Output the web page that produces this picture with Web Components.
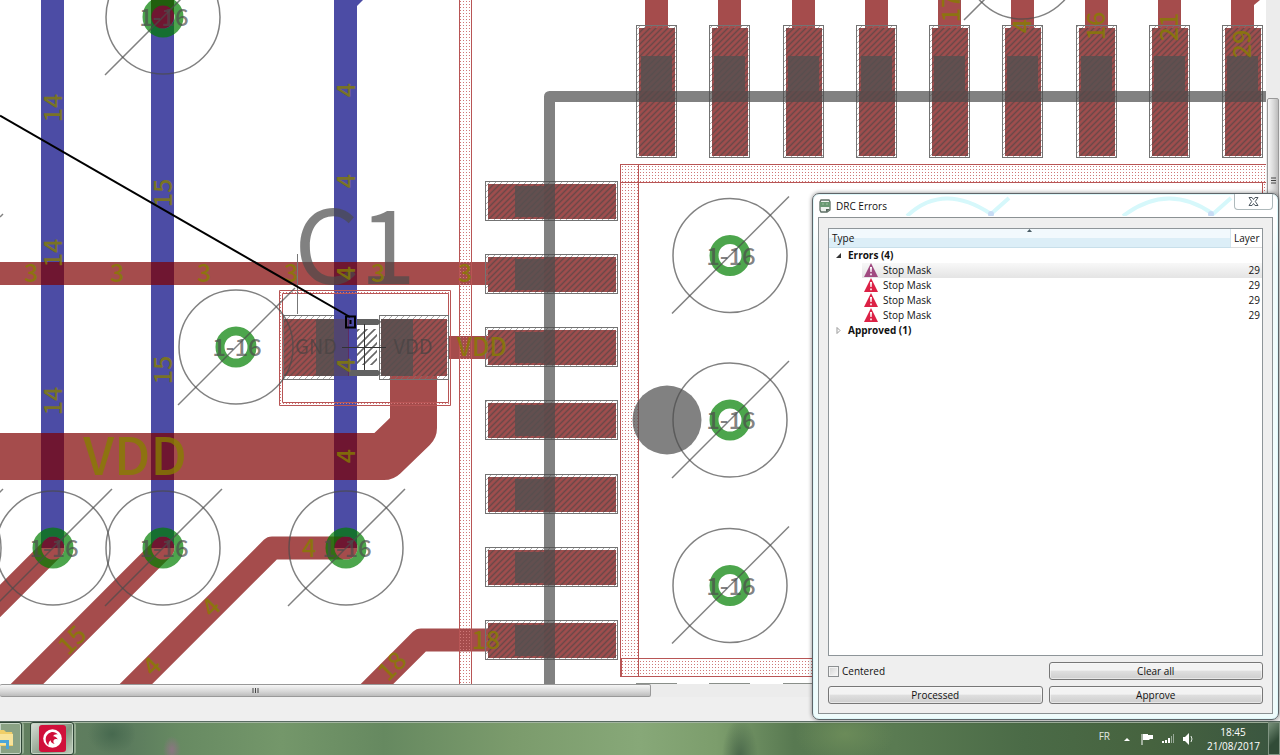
<!DOCTYPE html>
<html lang="en">
<head>
<meta charset="utf-8">
<title>Board - DRC Errors</title>
<style>
html, body { margin: 0; height: 100%; }
body { font: 10px/14px "Open Sans", "Noto Sans", sans-serif; color: #111; background: #efefef; overflow: hidden; }
</style>
</head>
<body>
<desk-top>
  <pcb-board slot="board"></pcb-board>
  <scroll-bar slot="vertical" direction="vertical"></scroll-bar>
  <scroll-bar slot="horizontal" direction="horizontal"></scroll-bar>
  <drc-dialog slot="window" heading="DRC Errors">
    <error-list></error-list>
    <check-box slot="option">Centered</check-box>
    <push-button slot="action">Clear all</push-button>
    <push-button slot="action">Processed</push-button>
    <push-button slot="action">Approve</push-button>
  </drc-dialog>
  <task-bar slot="taskbar">
    <system-tray></system-tray>
  </task-bar>
</desk-top>

<script>
class Base extends HTMLElement {
  constructor() {
    super();
    this.attachShadow({ mode: "open" });
  }
  connectedCallback() {
    this.shadowRoot.innerHTML = this.view();
  }
}

customElements.define("desk-top", class extends Base {
  view() {
    return `<style>
      :host { display: flex; flex-direction: column; height: 100vh; position: relative; }
      .editor { flex: 1; min-height: 0; display: grid; grid-template-columns: minmax(0, 1fr) 14px; grid-template-rows: minmax(0, 1fr) 13px; }
      .status { height: 24px; }
    </style>
    <div class="editor">
      <slot name="board"></slot><slot name="vertical"></slot><slot name="horizontal"></slot>
    </div>
    <div class="status"></div>
    <slot name="taskbar"></slot>
    <slot name="window"></slot>`;
  }
});

customElements.define("pcb-board", class extends Base {
  via(x, y, bare) {
    const ring = bare ? "" : `<circle class="ring" cx="${x}" cy="${y}" r="16"/><text class="via" x="${x + 1}" y="${y + 9}">1-16</text>`;
    return `${ring}<circle class="line" cx="${x}" cy="${y}" r="57"/><path class="line" d="M${x - 58} ${y + 58}L${x + 59} ${y - 59}"/>`;
  }
  label(text, x, y, turn = 0) {
    return `<text class="net" transform="translate(${x} ${y}) rotate(${turn})" y="9">${text}</text>`;
  }
  pad(x, y, w, h, core) {
    return `<rect class="mask" x="${x + .5}" y="${y + .5}" width="${w}" height="${h}"/>
      <rect class="copper" x="${x + 3}" y="${y + 3}" width="${w - 4}" height="${h - 4}"/>
      <rect fill="url(#shade)" x="${x + 3}" y="${y + 3}" width="${w - 4}" height="${h - 4}"/>
      <rect class="core" x="${core[0]}" y="${core[1]}" width="${core[2]}" height="${core[3]}"/>`;
  }
  view() {
    const columns = [636, 709, 783, 856, 929, 1002, 1076, 1149, 1222];
    const rows = [181, 254, 327, 400, 474, 547, 620];
    const n = (...a) => this.label(...a);
    return `<style>
      :host { display: block; background: #fff; overflow: hidden; min-width: 0; }
      svg { display: block; width: 100%; height: 100%; }
      text { text-anchor: middle; font-family: "Noto Sans CJK SC", "DejaVu Sans", sans-serif; }
      .blue { fill: none; stroke: rgb(0 0 127 / .7); stroke-width: 23; }
      .red { fill: none; stroke: rgb(127 0 0 / .7); stroke-width: 23; stroke-linejoin: round; }
      .copper { fill: rgb(127 0 0 / .7); }
      .core { fill: rgb(84 80 80 / .8); }
      .mask { fill: url(#edge); stroke: #737373; }
      .ring { fill: none; stroke: rgb(0 127 0 / .7); stroke-width: 9; }
      .line { fill: none; stroke: rgb(76 76 76 / .7); stroke-width: 1.5; }
      .zone { fill: url(#dots); stroke: #b85555; }
      .via { font-size: 24px; font-weight: 500; fill: rgb(76 76 76 / .7); }
      .net { font-size: 25px; font-weight: 500; fill: rgb(134 127 0 / .78); }
      .part { font-size: 102px; fill: rgb(76 76 76 / .7); }
      .pin { font-size: 20px; fill: rgb(70 66 66 / .7); }
      .outline { fill: none; stroke: rgb(76 76 76 / .7); stroke-width: 11; stroke-linejoin: round; }
    </style>
    <svg role="img" aria-label="Circuit board layout">
      <defs>
        <pattern id="dots" width="6" height="6" patternUnits="userSpaceOnUse">
          <path fill="#cf7878" d="M1 1h1v1h-1zM4 4h1v1h-1zM4 1h1v1h-1zM1 4h1v1h-1z"/>
        </pattern>
        <pattern id="edge" width="6" height="6" patternUnits="userSpaceOnUse">
          <path d="M-1 7L7 -1" stroke="#777" stroke-opacity=".6"/>
        </pattern>
        <pattern id="shade" width="6" height="6" patternUnits="userSpaceOnUse">
          <path d="M-1 7L7 -1M-2 2L2 -2M4 8L8 4" stroke="#5e5050" stroke-opacity=".55" stroke-width="2.6"/>
        </pattern>
        <pattern id="coarse" width="8" height="8" patternUnits="userSpaceOnUse">
          <path d="M-1 9L9 -1M-2 2L2 -2M6 10L10 6" stroke="#666" stroke-width="1.6"/>
        </pattern>
      </defs>

      <path class="blue" d="M52.5 0V548M162.5 0V548M345.5 0V548"/>
      <path d="M357 0h6l-6 6z" fill="#4c4ca5"/>
      <path class="red" d="M0 273.5H488"/>
      <path class="red" d="M448 347.5H488"/>
      <path class="red" stroke-linecap="round" d="M-20 621L53 548"/>
      <path class="red" stroke-linecap="round" d="M13 698L163 548"/>
      <path class="red" stroke-linecap="round" d="M122 698L272 548H346"/>
      <path class="red" stroke-linecap="round" d="M162.5 -20V17"/>
      <path class="red" d="M363 698L421 640H488"/>
      <path class="red" style="stroke-width:47" d="M-20 456.5H384L413.5 428V376"/>
      <path class="red" d="${columns.map(x => `M${x + 20.5} 0V28`).join("")}"/>
      <path d="M1254 0h6l-6 5z" fill="#a54c4c"/>

      <rect class="zone" x="459.5" y="-2" width="12" height="700"/>
      <rect class="zone" x="620.5" y="164.5" width="18" height="512"/>
      <rect class="zone" x="620.5" y="164.5" width="660" height="18"/>
      <rect class="zone" x="621.5" y="658.5" width="660" height="18"/>
      <rect class="zone" x="1262.5" y="182.5" width="18" height="494"/>
      <path d="M279.5 290.5H450.5V405.5H279.5ZM282.500 293.5V402.5H448.5V293.5Z" fill="url(#dots)" fill-rule="evenodd" stroke="#b85555"/>

      ${columns.map(x => this.pad(x, 25, 40, 132, [x + 5, 56, 31, 35])).join("")}
      ${rows.map(y => this.pad(485, y, 132, 39, [515, y + 5, 29, 31])).join("")}
      <path class="outline" d="M549.5 690V96.5H1266"/>
      <path d="M${columns.map(x => `${x} 683.5h41`).join("M")}" stroke="#8a8f8a"/>

      <path class="mask" d="M334 315.5H283.5V379.5H334"/>
      <rect class="mask" x="379.5" y="315.5" width="69" height="64"/>
      <rect class="copper" x="284" y="319" width="65" height="57"/>
      <rect class="copper" x="381" y="319" width="66" height="57"/>
      <rect fill="url(#shade)" x="284" y="319" width="50" height="57"/>
      <rect fill="url(#shade)" x="381" y="319" width="66" height="57"/>
      <rect class="core" x="316" y="319" width="32" height="57"/>
      <rect class="core" x="381" y="319" width="32" height="57"/>
      <rect x="334" y="315" width="23" height="65" fill="#4646a0" opacity=".45"/>
      <path d="M357 319h21l3 3-3 3h-21zM349 370h29l3 3-3 3h-29z" fill="#616161"/>
      <rect x="357" y="329" width="20" height="36" fill="url(#coarse)"/>
      <path d="M342 347.5H386M364.5 324V370" stroke="#333"/>
      <path d="M297.5 254V314" stroke="#777"/>
      <text class="pin" x="316" y="354">GND</text>
      <text class="pin" x="413" y="354">VDD</text>

      ${[[53, 548], [163, 548], [346, 548], [236, 347], [163, 17], [730, 255.5], [730, 420], [730, 585.5]].map(p => this.via(...p)).join("")}
      ${this.via(-56, 548, true)}${this.via(1022, -38, true)}
      <path class="line" d="M0 217l3-3"/>
      <circle cx="667" cy="420" r="34.5" fill="rgb(76 76 76 / .7)"/>
      <text class="part" x="355" y="284">C1</text>

      ${[108, 253, 401].map(y => n("14", 53, y, -90)).join("")}
      ${[193, 370].map(y => n("15", 163, y, -90)).join("")}
      ${[90, 181, 273, 365, 456].map(y => n("4", 346, y, -90)).join("")}
      ${[31, 117, 204, 291, 378, 465].map(x => n("3", x, 273)).join("")}
      ${n("4", 309, 548)}${n("4", 211, 607, -45)}${n("4", 152, 666, -45)}
      ${n("15", 72, 640, -45)}${n("18", 392, 666, -45)}${n("18", 486, 640)}
      ${n("17", 951, 8, -90)}${n("4", 1022, 26, -90)}${n("16", 1096, 26, -90)}${n("21", 1169, 27, -90)}${n("29", 1242, 44, -90)}
      ${n("VDD", 482, 347)}
      <text class="net" style="font-size:52px" x="135" y="475">VDD</text>

      <path d="M0 115.5L350 317" stroke="#000" stroke-width="2"/>
      <path d="M346 316.5h9v11h-9zM350.500 320v4" fill="none" stroke="#000" stroke-width="2"/>
    </svg>`;
  }
});

customElements.define("scroll-bar", class extends Base {
  view() {
    const vertical = this.getAttribute("direction") === "vertical";
    return `<style>
      :host { display: flex; flex-direction: ${vertical ? "column" : "row"}; background: #ececec; min-width: 0; min-height: 0; }
      :host([direction=horizontal]) { grid-column: 1 / -1; }
      .lead { flex: 0 0 ${vertical ? "98px" : "0px"}; }
      .thumb { box-sizing: border-box; display: grid; place-items: center; border: 1px solid #999; border-radius: 2px;
        flex: 0 0 ${vertical ? "24%" : "651px"}; background: linear-gradient(${vertical ? "to right" : "to bottom"}, #f6f6f6, #d6d6d6 60%, #bcbcbc);
        ${vertical ? "margin: 0 1px;" : "border-left: 0; padding-right: 140px;"} }
      svg { width: 8px; height: 8px; ${vertical ? "transform: rotate(90deg)" : ""} }
    </style>
    <div class="lead"></div>
    <div class="thumb"><svg viewBox="0 0 8 8"><path d="M2 1v5M4.500 1v5M7 1v5" stroke="#444"/></svg></div>`;
  }
});

customElements.define("drc-dialog", class extends Base {
  view() {
    return `<style>
      :host { position: absolute; right: 1px; bottom: 35px; width: 467px; height: 527px; box-sizing: border-box;
        display: flex; flex-direction: column; padding: 0 5px 5px; border: 1px solid #5d6468; border-radius: 7px;
        background: linear-gradient(#fff 0 30px, #f2fdfd 60px, #effcfc); box-shadow: inset 0 0 0 1px #dff8fa, 0 0 4px #0007; }
      header { height: 23px; display: flex; align-items: center; gap: 5px; position: relative; }
      header > svg { margin-left: 1px; }
      h1 { margin: 0; font: inherit; }
      .arcs { position: absolute; left: 75px; top: 2px; width: 370px; height: 20px; margin: 0; }
      button { margin: 0 0 auto auto; box-sizing: border-box; width: 39px; height: 16px; padding: 0; border: 1px solid #aeb9bb; border-top: 0;
        border-radius: 0 0 4px 4px; background: #fffc; display: grid; place-items: center; position: relative; }
      .client { flex: 1; min-height: 0; box-sizing: border-box; border: 1px solid #8b9193; background: #efefef; padding: 10px 9px 9px; display: flex; flex-direction: column; }
      .list { flex: 1; min-height: 0; display: flex; }
      .controls { margin-top: 6px; display: grid; grid-template-columns: 1fr 1fr; gap: 6px; align-items: center; }
    </style>
    <header>
      <svg width="12" height="14" viewBox="0 0 12 14" aria-hidden="true"><path d="M2 1h8l1 2v8l-3 2H2l-1-2V3z" fill="#eef3ee" stroke="#5f6f65" stroke-width="1.3"/><path d="M1 3h10v5H1z" fill="#6a9a73"/><path d="M3 5h2M7 5h2" stroke="#9dbfa2" fill="none"/><path d="M7 13v-3h4z" fill="#52655a"/></svg>
      <h1>${this.getAttribute("heading")}</h1>
      <svg class="arcs" viewBox="0 0 370 20" aria-hidden="true"><g fill="none" stroke="#d6f8fb" stroke-width="4"><path d="M14 20Q50-14 98 18L116 2M230 20Q275-14 320 18L338 2"/></g><circle cx="98" cy="18" r="3" fill="#c8dcf5"/><circle cx="318" cy="18" r="3" fill="#c8dcf5"/></svg>
      <button aria-label="Close"><svg width="11" height="9" viewBox="0 0 11 9"><path d="M1 .5h3l1.500 2L7 .5h3L7.300 4.500 10 8.500H7l-1.500-2-1.500 2H1l2.700-4z" fill="#fff" stroke="#4d5860"/></svg></button>
    </header>
    <div class="client">
      <div class="list"><slot></slot></div>
      <div class="controls"><slot name="option"></slot><slot name="action"></slot></div>
    </div>`;
  }
});

customElements.define("error-list", class extends Base {
  view() {
    const row = (color, active) => `<tr class="${active ? "active" : ""}"><td class="item"><svg width="14" height="14" viewBox="0 0 14 14" aria-hidden="true"><path d="M7 0L14 14H0z" fill="${color}"/><path d="M6 4h2l-.4 5H6.400zM6.200 10.500h1.600v1.800H6.200z" fill="#fff"/></svg>Stop Mask</td><td class="layer">29</td></tr>`;
    return `<style>
      :host { flex: 1; box-sizing: border-box; border: 1px solid #8e9599; background: #fff; overflow: hidden; }
      table { width: 100%; border-collapse: collapse; table-layout: fixed; }
      th, td { padding: 0; height: 15px; line-height: 15px; text-align: left; font-weight: 400; white-space: nowrap; }
      th { position: relative; height: 18px; padding-left: 3px; border-bottom: 1px solid #c8dfea; }
      thead th:first-child { background: linear-gradient(#f2f9fd 50%, #dceef7 50%); }
      thead th:last-child { width: 28px; border-left: 1px solid #d5e5ee; border-bottom-color: #ddd; }
      .sort { position: absolute; left: 198px; top: 0; }
      tbody th { height: 14px; font-weight: 700; border: 0; padding: 0; }
      tbody th svg { width: 7px; height: 7px; margin: 0 6px; }
      .item { padding-left: 34px; }
      .item svg { vertical-align: -3px; margin: 0 5px 0 1px; height: 14px; }
      .layer { text-align: right; padding-right: 2px; }
      .active { background: linear-gradient(to right, #fff 33px, #fff0 33px), linear-gradient(#f8f8f8, #e4e4e4); }
    </style>
    <table>
      <thead><tr><th scope="col">Type<svg class="sort" width="5" height="3"><path d="M0 3l2.500-3L5 3z" fill="#4b5d66"/></svg></th><th scope="col">Layer</th></tr></thead>
      <tbody>
        <tr><th colspan="2"><svg viewBox="0 0 7 7"><path d="M6 1v5H1z" fill="#333"/></svg>Errors (4)</th></tr>
        ${row("#a04a80", true)}${row("#dc2145")}${row("#dc2145")}${row("#dc2145")}
        <tr><th colspan="2"><svg viewBox="0 0 7 7"><path d="M2 .5L5 3.500 2 6.500z" fill="#fff" stroke="#999"/></svg>Approved (1)</th></tr>
      </tbody>
    </table>`;
  }
});

customElements.define("check-box", class extends Base {
  view() {
    return `<style>
      :host { display: block; }
      label { display: flex; align-items: center; gap: 3px; }
      input { appearance: none; margin: 0; width: 11px; height: 11px; border: 1px solid #8c8f91; background: linear-gradient(135deg, #d3d3d3, #fafafa); box-shadow: inset 0 0 0 1px #f3f3f3; }
    </style>
    <label><input type="checkbox"><slot></slot></label>`;
  }
});

customElements.define("push-button", class extends Base {
  view() {
    return `<style>
      :host { display: block; }
      button { display: block; width: 100%; height: 18px; padding: 0; font: inherit; color: inherit; border: 1px solid #777; border-radius: 3px;
        background: linear-gradient(#f3f3f3 0 45%, #dfdfdf 50%, #cecece); box-shadow: inset 0 0 0 1px #fafafa8f; }
    </style>
    <button type="button"><slot></slot></button>`;
  }
});

customElements.define("task-bar", class extends Base {
  view() {
    return `<style>
      :host { display: flex; height: 34px; box-sizing: border-box; border-top: 1px solid #596b62; box-shadow: inset 0 1px #a3b5a0; gap: 8px;
        background:
          radial-gradient(ellipse 24px 20px at 112px 12px, #47694f, #47694f00),
          radial-gradient(ellipse 9px 14px at 172px 28px, #8c7582, #8c758200),
          radial-gradient(ellipse 18px 40px at 740px 36px, #49674a, #49674a00),
          radial-gradient(ellipse 50px 30px at 845px 12px, #6b8b59, #6b8b5900),
          linear-gradient(to right, #648060, #5b7b5d 10%, #678a62 14%, #74976a 22%, #668960 30%, #7b9b6c 40%, #87a878 50%, #7c9d6c 56%, #587951 62%, #5a7b52 70%, #4b6b47 80%, #46633f 90%, #3a5540); }
      button { box-sizing: border-box; height: 33px; padding: 0; border: 1px solid #2f4537; border-radius: 3px; box-shadow: inset 0 0 0 1px #c4d4c3, 3px 0 0 -1px #93aa90; }
      .files { width: 22px; border-left: 0; border-radius: 0 3px 3px 0; background: #8aa284; }
      .app { width: 44px; display: grid; place-items: center; background: linear-gradient(135deg, #d9dfd8, #829781 60%, #c4d1c1); }
      .files svg { display: block; }
      ::slotted(system-tray) { margin-left: auto; }
    </style>
    <button class="files" aria-label="File explorer"><svg width="16" height="24" viewBox="0 0 16 24"><path d="M0 3h4l2 2h6l1 4v10H0z" fill="#f0ce68"/><path d="M0 7h13v11H0z" fill="#f8e39a"/><path d="M0 13h9v9H6v-6H0z" fill="#4ba5d8"/></svg></button>
    <button class="app" aria-label="EAGLE"><svg width="27" height="27" viewBox="0 0 27 27"><rect width="27" height="27" rx="3" fill="#d0103a"/><circle cx="13.500" cy="13.500" r="9.300" fill="#fff"/><path d="M9.500 20.500C5.500 17 5.500 9.500 11.500 7.500c3-1 5.500 0 7.500 2-2.500-.5-4.300.3-4.700 1.700 2 .2 3.700 1.300 4.500 3.200-1.600-.7-3.300-.5-4 .6-.9 1.400-.3 3 1 4-2.500-.3-4-1.800-4.200-3.800-1.600 1.200-2.400 3-2.100 5.300z" fill="#d0103a"/></svg></button>
    <slot></slot>`;
  }
});

customElements.define("system-tray", class extends Base {
  view() {
    return `<style>
      :host { display: flex; align-items: center; color: #fff; gap: 11px; }
      .icons { display: block; margin-left: 2px; }
      .clock { text-align: center; width: 52px; white-space: nowrap; margin-left: 1px; }
      .clock span { display: block; }
      button { width: 12px; height: 33px; margin-left: -2px; padding: 0; border: 1px solid #809482; background: linear-gradient(135deg, #78917a, #314b37 60%); }
      .lang { color: #e0e6e0; margin-bottom: 5px; }
    </style>
    <span class="lang">FR</span>
    <svg class="icons" width="72" height="16" viewBox="0 0 72 16" aria-hidden="true"><path d="M1 10l3-3 3 3z" fill="#fff"/><path d="M19 3v11" stroke="#fff"/><path d="M20 3h5v1h5v4h-3l-1 1h-6z" fill="#fff"/><path d="M39 12v-2h2v2zM42 12V9h2v3zM45 12V7h2v5z" fill="#fff"/><path d="M48 12V5h1v7zM50 12V3h1v9z" fill="#9aaa9a"/><path d="M60 6h2l4-4v12l-4-4h-2z" fill="#fff"/><path d="M68 5q2 3 0 6" fill="none" stroke="#e5ece5"/></svg>
    <time class="clock" datetime="2017-08-21T18:45"><span>18:45</span><span>21/08/2017</span></time>
    <button aria-label="Show desktop"></button>`;
  }
});
</script>
</body>
</html>
